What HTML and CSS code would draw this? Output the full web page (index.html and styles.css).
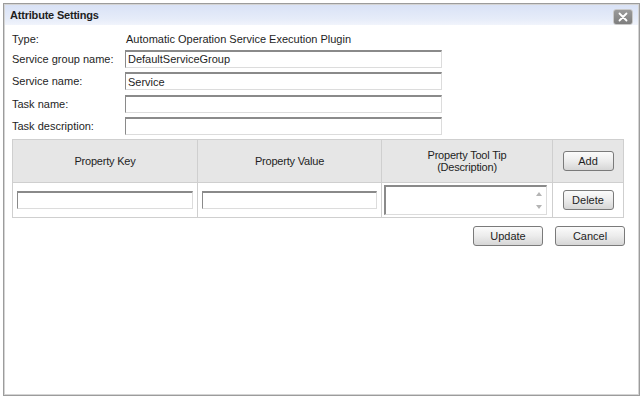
FILE: index.html
```html
<!DOCTYPE html>
<html lang="en">
<head>
    <meta charset="UTF-8">
    <title>Attribute Settings</title>
    <link rel="stylesheet" href="styles.css">
</head>
<body>
    <div class="dialog">
        <div class="dialog-title">
            <span>Attribute Settings</span>
            <button class="close-btn" aria-label="Close">
                <svg width="10" height="10" viewBox="0 0 10 10">
                    <path d="M1.5 1.5 L8.5 8.5 M8.5 1.5 L1.5 8.5" stroke="#fff" stroke-width="1.8" stroke-linecap="round"/>
                </svg>
            </button>
        </div>

        <div class="dialog-body">
            <div class="form">
                <label>Type:</label>
                <span class="value">Automatic Operation Service Execution Plugin</span>

                <label>Service group name:</label>
                <input type="text" class="field" value="DefaultServiceGroup">

                <label>Service name:</label>
                <input type="text" class="field" value="Service">

                <label>Task name:</label>
                <input type="text" class="field" value="">

                <label>Task description:</label>
                <input type="text" class="field" value="">
            </div>

            <table class="prop-table">
                <colgroup>
                    <col class="col-key">
                    <col class="col-value">
                    <col class="col-tip">
                    <col class="col-action">
                </colgroup>
                <thead>
                    <tr>
                        <th>Property Key</th>
                        <th>Property Value</th>
                        <th>Property Tool Tip<br>(Description)</th>
                        <th><button class="btn btn-small">Add</button></th>
                    </tr>
                </thead>
                <tbody>
                    <tr>
                        <td><input type="text" class="field cell-field"></td>
                        <td><input type="text" class="field cell-field"></td>
                        <td>
                            <div class="tip-box">
                                <span class="arrow up"></span>
                                <span class="arrow down"></span>
                            </div>
                        </td>
                        <td><button class="btn btn-small">Delete</button></td>
                    </tr>
                </tbody>
            </table>

            <div class="actions">
                <button class="btn btn-wide">Update</button>
                <button class="btn btn-wide">Cancel</button>
            </div>
        </div>
    </div>
</body>
</html>
```

FILE: styles.css
```css
:root {
    --text: #1e1e1e;
    --border: #cfcfcf;
    --field-dark: #8a8a8a;
    --field-light: #dcdcdc;
    --header-bg: #e6e6e6;
}

* {
    margin: 0;
    padding: 0;
    box-sizing: border-box;
}

body {
    font-family: 'Liberation Sans', Arial, sans-serif;
    font-size: 11px;
    color: var(--text);
    background: #ffffff;
    padding: 3px;
}

/* Dialog frame */
.dialog {
    width: 637px;
    height: 393px;
    border: 1px solid #9c9c9c;
    box-shadow: inset 0 0 0 1px #d4d4d4;
    background: #ffffff;
    display: flex;
    flex-direction: column;
}

.dialog-title {
    height: 20px;
    margin: 1px 1px 0;
    padding: 0 5px 0 5px;
    display: flex;
    align-items: center;
    justify-content: space-between;
    background: linear-gradient(180deg, #d9e2f6 0%, #e6ecf9 70%, #f1f4fc 100%);
    font-weight: bold;
    letter-spacing: -0.2px;
}

.close-btn {
    width: 20px;
    height: 16px;
    border: 1px solid #c9c9c9;
    border-radius: 3px;
    background: linear-gradient(180deg, #9a9a9a 0%, #7e7e7e 100%);
    display: flex;
    align-items: center;
    justify-content: center;
    margin-top: 3px;
}

.dialog-body {
    padding: 0 0 0 8px;
}

/* Top form */
.form {
    display: grid;
    grid-template-columns: 113px 317px;
    grid-template-rows: 12px 18px 18px 18px 18px;
    row-gap: 4.6px;
    padding-top: 8px;
    align-items: center;
}

.form label,
.form .value {
    line-height: 12px;
    white-space: nowrap;
}

.form .value {
    padding-left: 1px;
}

.field {
    height: 18px;
    width: 100%;
    border-style: solid;
    border-width: 2px 1px 1px 1px;
    border-color: var(--field-dark) var(--field-light) var(--field-light) var(--field-dark);
    font-family: inherit;
    font-size: 11px;
    color: var(--text);
    padding: 0 2px;
    background: #ffffff;
    outline: none;
}

/* Property table */
.prop-table {
    margin-top: 4px;
    width: 611px;
    border-collapse: collapse;
    table-layout: fixed;
}

.col-key { width: 185px; }
.col-value { width: 184px; }
.col-tip { width: 171px; }
.col-action { width: 71px; }

.prop-table th {
    height: 43px;
    background: var(--header-bg);
    border: 1px solid var(--border);
    font-weight: normal;
    line-height: 12px;
    letter-spacing: -0.2px;
    text-align: center;
    vertical-align: middle;
}

.prop-table td {
    height: 35px;
    border: 1px solid var(--border);
    padding: 0 4px;
    text-align: center;
    vertical-align: middle;
}

.cell-field {
    display: block;
}

.tip-box {
    position: relative;
    height: 30px;
    width: 163px;
    margin-left: -2px;
    border-style: solid;
    border-width: 2px 1px 1px 2px;
    border-color: var(--field-dark) var(--field-light) var(--field-light) var(--field-dark);
}

.arrow {
    position: absolute;
    right: 4px;
    width: 0;
    height: 0;
    border-left: 3px solid transparent;
    border-right: 3px solid transparent;
}

.arrow.up {
    top: 5px;
    border-bottom: 4px solid #b4b4b4;
}

.arrow.down {
    bottom: 5px;
    border-top: 4px solid #b4b4b4;
}

/* Buttons */
.btn {
    height: 20px;
    border: 1px solid #7a7a7a;
    border-radius: 3px;
    background: linear-gradient(180deg, #fbfbfb 0%, #ececec 50%, #d6d6d6 100%);
    font-family: inherit;
    font-size: 11px;
    color: var(--text);
    cursor: pointer;
}

.btn-small {
    width: 51px;
}

.btn-wide {
    width: 70px;
}

.actions {
    width: 613px;
    margin-top: 8px;
    display: flex;
    justify-content: flex-end;
    gap: 12px;
}
```
